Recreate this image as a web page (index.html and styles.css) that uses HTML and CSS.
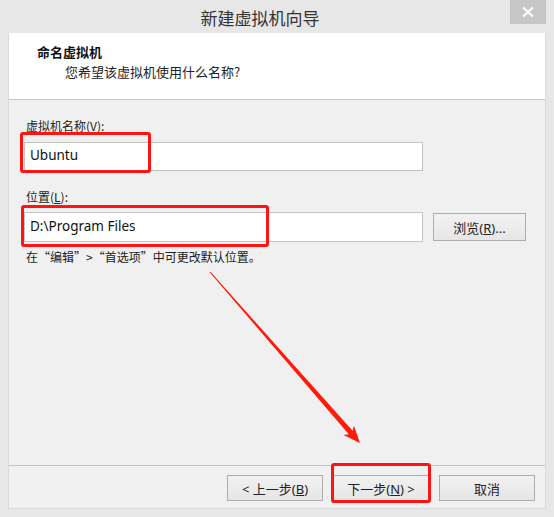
FILE: index.html
```html
<!DOCTYPE html>
<html lang="zh-CN">
<head>
    <meta charset="UTF-8">
    <title>新建虚拟机向导</title>
    <link rel="stylesheet" href="styles.css">
</head>
<body>

<div class="window">
    <div class="titlebar">
        <span class="title">新建虚拟机向导</span>
        <button class="close" type="button">
            <svg width="12" height="10" viewBox="0 0 12 10">
                <path d="M1 0.5 L11 9.5 M11 0.5 L1 9.5" stroke="#fff" stroke-width="2" fill="none"/>
            </svg>
        </button>
    </div>

    <div class="client">
        <div class="wizard-header">
            <div class="step-title">命名虚拟机</div>
            <div class="step-desc">您希望该虚拟机使用什么名称?</div>
        </div>

        <div class="wizard-body">
            <label class="field-label" for="vmName">虚拟机名称(<u>V</u>):</label>
            <input class="text-input name-input" id="vmName" type="text" value="Ubuntu">

            <label class="field-label second" for="vmPath">位置(<u>L</u>):</label>
            <div class="path-row">
                <input class="text-input path-input" id="vmPath" type="text" value="D:\Program Files">
                <button class="btn browse" type="button">浏览(<u>R</u>)...</button>
            </div>
            <p class="hint">在“编辑”&gt;“首选项”中可更改默认位置。</p>
        </div>

        <div class="wizard-footer">
            <button class="btn nav-btn" type="button">&lt; 上一步(<u>B</u>)</button>
            <button class="btn nav-btn" type="button">下一步(<u>N</u>) &gt;</button>
            <button class="btn nav-btn" type="button">取消</button>
        </div>
    </div>

    <!-- marcas rojas encima de la captura -->
    <div class="mark mark-name"></div>
    <div class="mark mark-path"></div>
    <div class="mark mark-next"></div>
    <svg class="arrow" width="554" height="517" viewBox="0 0 554 517">
        <polygon points="209.6,272.3 348.8,434.2 343.5,434.9 360,443 353.9,425.7 352.6,430.8 210.4,271.7" fill="#ff1a0a"/>
    </svg>
</div>

</body>
</html>
```

FILE: styles.css
```css
html, body {
    margin: 0;
    padding: 0;
    background-color: #e7e7e7;
}

.window {
    position: relative;
    width: 554px;
    height: 517px;
    background-color: #e7e7e7;
    font-family: "Noto Sans", "Noto Sans CJK SC", sans-serif;
    color: #1e1e1e;
    display: flex;
    flex-direction: column;
}

/* barra de título */
.titlebar {
    height: 33px;
    display: flex;
    align-items: center;
    justify-content: center;
    padding-right: 34px;
    box-sizing: border-box;
}

.title {
    font-family: "Noto Sans CJK SC", sans-serif;
    font-size: 17px;
    color: #333;
    margin-top: 2px;
}

.close {
    position: absolute;
    top: 0;
    right: 8px;
    width: 36px;
    height: 24px;
    border: none;
    padding: 0;
    background-color: #c6c6c6;
    display: flex;
    align-items: center;
    justify-content: center;
}

/* área del asistente */
.client {
    margin: 0 8px 8px 8px;
    flex-grow: 1;
    display: flex;
    flex-direction: column;
    background-color: #f0f0f0;
    border: 1px solid #dadada;
    border-top: none;
}

.wizard-header {
    height: 67px;
    box-sizing: border-box;
    background-color: #fff;
    border-bottom: 1px solid #c8c8c8;
    padding: 10px 0 0 28px;
    font-family: "Noto Sans CJK SC", sans-serif;
    font-size: 13px;
}

.step-title {
    font-weight: bold;
    line-height: 18px;
    color: #111;
}

.step-desc {
    margin-top: 2px;
    margin-left: 28px;
    line-height: 18px;
    color: #222;
}

.wizard-body {
    flex-grow: 1;
    padding: 18px 0 0 15px;
}

.field-label {
    display: block;
    padding-left: 2px;
    font-family: "Noto Sans CJK SC", sans-serif;
    font-size: 12px;
    line-height: 16px;
    margin-bottom: 8px;
    color: #222;
}

.field-label.second {
    margin-top: 18px;
    margin-bottom: 7px;
}

.text-input {
    display: block;
    width: 399px;
    height: 29px;
    box-sizing: border-box;
    border: 1px solid #c3c3c3;
    background-color: #fff;
    padding: 0 0 3px 5px;
    margin: 0;
    font-family: "Noto Sans", "Noto Sans CJK SC", sans-serif;
    font-size: 13.5px;
    color: #111;
    outline: none;
}

.path-row {
    display: flex;
    align-items: center;
    gap: 10px;
}

.path-input {
    height: 30px;
}

.btn {
    box-sizing: border-box;
    border: 1px solid #adadad;
    background: linear-gradient(#f2f2f2, #e6e6e6);
    font-family: "Noto Sans", "Noto Sans CJK SC", sans-serif;
    font-size: 13px;
    color: #222;
    padding: 0;
    margin: 0;
}

.browse {
    width: 93px;
    height: 28px;
}

.hint {
    margin: 7px 0 0 2px;
    font-family: "Noto Sans CJK SC", sans-serif;
    font-size: 12px;
    line-height: 16px;
    color: #222;
}

.wizard-footer {
    height: 43px;
    box-sizing: border-box;
    border-top: 1px solid #c4c4c4;
    display: flex;
    justify-content: flex-end;
    gap: 10px;
    padding: 9px 10px 0 0;
}

.nav-btn {
    width: 96px;
    height: 26px;
}

/* anotaciones */
.mark {
    position: absolute;
    border: 3px solid #ff1414;
    border-radius: 3px;
    box-sizing: border-box;
}

.mark-name {
    left: 20px;
    top: 132px;
    width: 131px;
    height: 41px;
}

.mark-path {
    left: 21px;
    top: 205px;
    width: 248px;
    height: 42px;
}

.mark-next {
    left: 331px;
    top: 463px;
    width: 100px;
    height: 40px;
}

.arrow {
    position: absolute;
    left: 0;
    top: 0;
    pointer-events: none;
}
```
